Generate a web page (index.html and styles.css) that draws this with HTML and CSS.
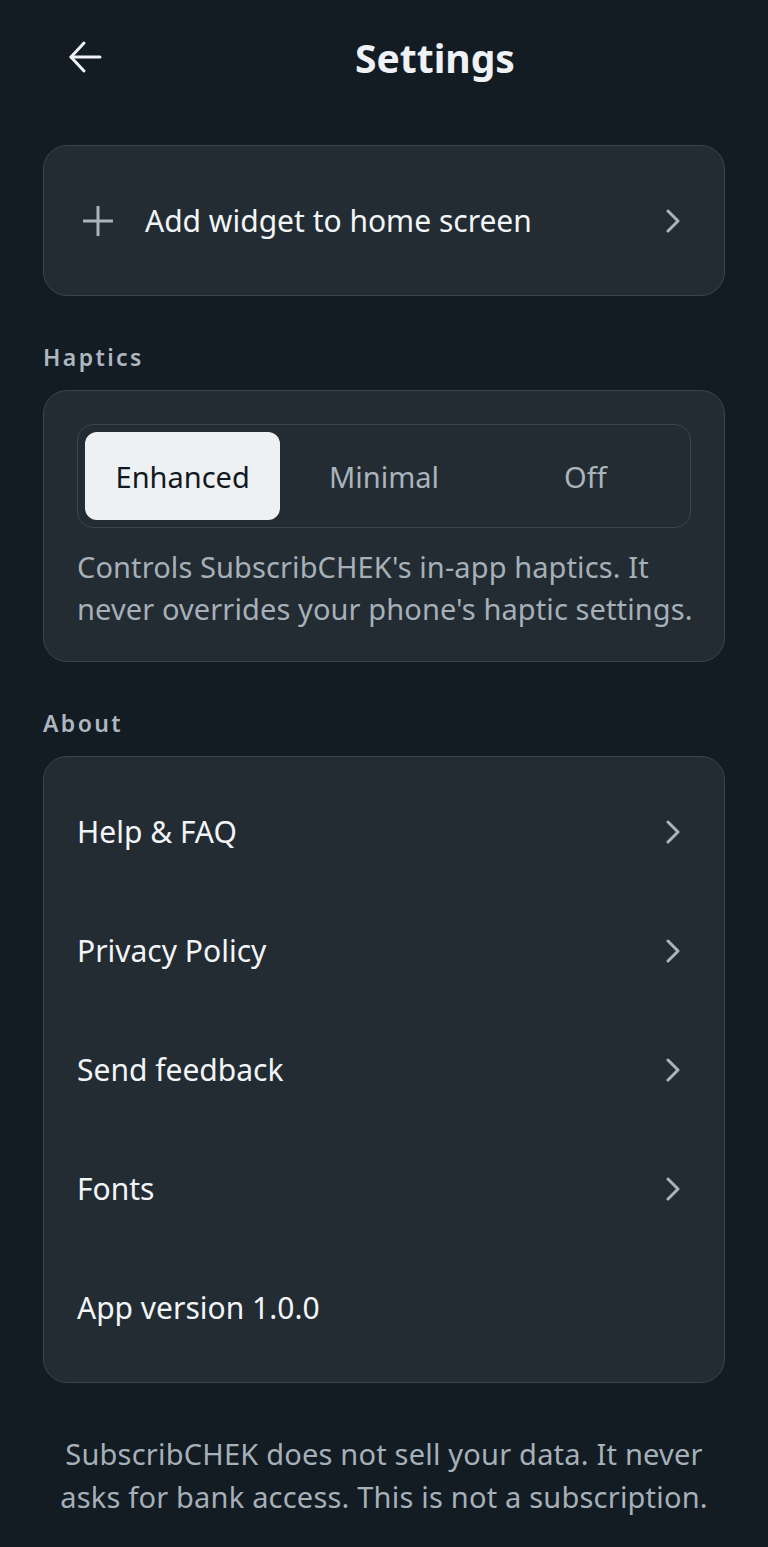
FILE: index.html
```html
<!DOCTYPE html>
<html lang="en">
<head>
  <meta charset="UTF-8">
  <meta name="viewport" content="width=device-width, initial-scale=1.0">
  <title>Settings</title>
  <link rel="stylesheet" href="styles.css">
</head>
<body>
  <div class="header">
    <button class="back-button" aria-label="Back">
      <svg width="34" height="34" viewBox="0 0 34 34" fill="none" stroke="currentColor" stroke-width="3" stroke-linecap="round" stroke-linejoin="round">
        <path d="M32 17H3"/>
        <path d="M16 3L3 17l13 14"/>
      </svg>
    </button>
    <h1 class="title">Settings</h1>
  </div>

  <div class="container">
    <div class="card widget-card">
      <svg class="plus-icon" width="30" height="30" viewBox="0 0 30 30" fill="none" stroke="currentColor" stroke-width="3" stroke-linecap="round">
        <path d="M15 1v28"/>
        <path d="M1 15h28"/>
      </svg>
      <span class="row-text">Add widget to home screen</span>
      <svg class="chevron" width="16" height="24" viewBox="0 0 16 24" fill="none" stroke="currentColor" stroke-width="3" stroke-linecap="round" stroke-linejoin="round">
        <path d="M3 2l10 10L3 22"/>
      </svg>
    </div>

    <div class="section-label">Haptics</div>
    <div class="card haptics-card">
      <div class="segmented">
        <button class="segment active">Enhanced</button>
        <button class="segment">Minimal</button>
        <button class="segment">Off</button>
      </div>
      <p class="description">Controls SubscribCHEK's in-app haptics. It never overrides your phone's haptic settings.</p>
    </div>

    <div class="section-label">About</div>
    <div class="card list-card">
      <div class="list-row">
        <span class="row-text">Help &amp; FAQ</span>
        <svg class="chevron" width="16" height="24" viewBox="0 0 16 24" fill="none" stroke="currentColor" stroke-width="3" stroke-linecap="round" stroke-linejoin="round"><path d="M3 2l10 10L3 22"/></svg>
      </div>
      <div class="list-row">
        <span class="row-text">Privacy Policy</span>
        <svg class="chevron" width="16" height="24" viewBox="0 0 16 24" fill="none" stroke="currentColor" stroke-width="3" stroke-linecap="round" stroke-linejoin="round"><path d="M3 2l10 10L3 22"/></svg>
      </div>
      <div class="list-row">
        <span class="row-text">Send feedback</span>
        <svg class="chevron" width="16" height="24" viewBox="0 0 16 24" fill="none" stroke="currentColor" stroke-width="3" stroke-linecap="round" stroke-linejoin="round"><path d="M3 2l10 10L3 22"/></svg>
      </div>
      <div class="list-row">
        <span class="row-text">Fonts</span>
        <svg class="chevron" width="16" height="24" viewBox="0 0 16 24" fill="none" stroke="currentColor" stroke-width="3" stroke-linecap="round" stroke-linejoin="round"><path d="M3 2l10 10L3 22"/></svg>
      </div>
      <div class="list-row">
        <span class="row-text">App version 1.0.0</span>
      </div>
    </div>

    <p class="footer-note">SubscribCHEK does not sell your data. It never asks for bank access. This is not a subscription.</p>
  </div>
</body>
</html>
```

FILE: styles.css
```css
body {
  margin: 0;
  padding: 0;
  background-color: #131b23;
  color: #f2f5f8;
  font-family: "Noto Sans", Roboto, sans-serif;
}
.header {
  display: flex;
  align-items: center;
  height: 114px;
  padding-left: 68px;
}
.back-button {
  background: none;
  border: none;
  padding: 0;
  color: #eef2f6;
  width: 34px;
  height: 34px;
  display: flex;
  cursor: pointer;
}
.title {
  flex: 1;
  margin: 0;
  text-align: center;
  font-size: 39px;
  font-weight: 700;
  color: #eef2f6;
}
.container {
  padding: 0 43px;
  margin-top: 31px;
}
.card {
  background-color: #232c33;
  border: 1.5px solid #3b444c;
  border-radius: 24px;
  box-sizing: border-box;
}
.widget-card {
  height: 151px;
  display: flex;
  align-items: center;
  padding: 0 43px 0 39px;
}
.plus-icon {
  color: #aab4bd;
  margin-right: 32px;
}
.row-text {
  font-size: 30px;
  color: #f2f5f8;
  flex: 1;
}
.chevron {
  color: #aab4bd;
}
.section-label {
  font-size: 23px;
  line-height: 30px;
  font-weight: 600;
  letter-spacing: 2.4px;
  color: #aeb7c0;
  margin: 46px 0 18px;
}
.haptics-card {
  padding: 33px 26px 31px 33px;
}
.segmented {
  display: flex;
  gap: 6px;
  height: 104px;
  box-sizing: border-box;
  border: 1.5px solid #3b444c;
  border-radius: 16px;
  padding: 7px;
  margin-right: 7px;
}
.segment {
  flex: 1;
  background: none;
  border: none;
  border-radius: 12px;
  font-family: inherit;
  font-size: 29px;
  color: #aab4bd;
  cursor: pointer;
}
.segment.active {
  background-color: #eef1f4;
  color: #121820;
}
.description {
  margin: 18px 0 0;
  font-size: 29px;
  line-height: 42px;
  letter-spacing: 0.1px;
  color: #a6b0b9;
}
.list-card {
  padding: 15px 43px 15px 33px;
}
.list-row {
  display: flex;
  align-items: center;
  height: 119px;
}
.footer-note {
  margin: 49px 0 0;
  text-align: center;
  font-size: 29px;
  line-height: 43px;
  letter-spacing: 0.2px;
  color: #a6b0b9;
}
```
